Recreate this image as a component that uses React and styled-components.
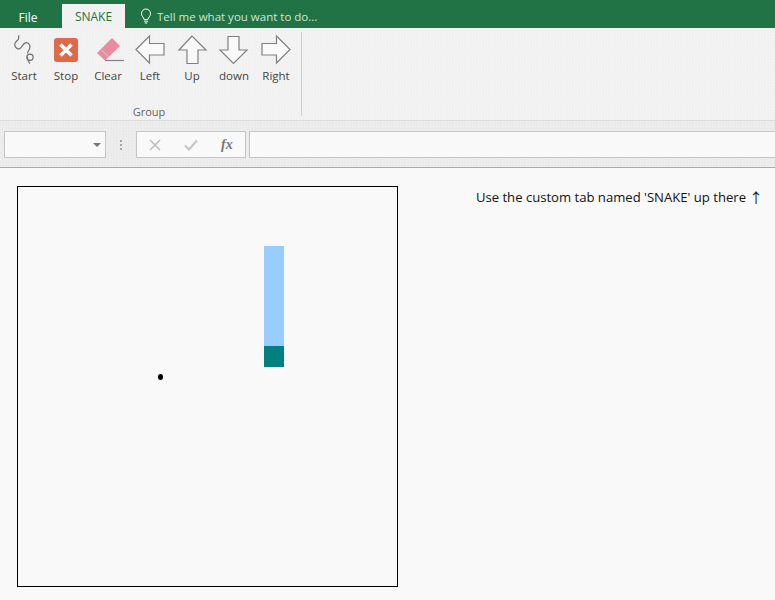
import React from "react";
import styled, { createGlobalStyle } from "styled-components";

const Global = createGlobalStyle`
  html, body { margin: 0; padding: 0; background: #f9f9f9; overflow: hidden; }
  body { width: 775px; height: 600px; font-family: "Open Sans", "Noto Sans", "Liberation Sans", sans-serif; }
`;

const Page = styled.div`
  width: 775px;
  height: 600px;
  display: flex;
  flex-direction: column;
  overflow: hidden;
`;

const TitleBar = styled.div`
  height: 24px;
  padding-top: 4px;
  background: #217346;
  display: flex;
  align-items: stretch;
`;

const FileTab = styled.div`
  width: 56px;
  margin-right: 6px;
  color: #fff;
  font-size: 12px;
  line-height: 27px;
  text-align: center;
`;

const ActiveTab = styled.div`
  width: 63px;
  background: #f1f1f1;
  color: #217346;
  font-size: 12px;
  line-height: 25px;
  text-align: center;
`;

const TellMe = styled.div`
  margin-left: 14px;
  display: flex;
  align-items: center;
  gap: 4px;
  color: #cfe6da;
  font-size: 11.5px;
`;

const Ribbon = styled.div`
  height: 93px;
  box-sizing: border-box;
  padding: 4px 0 0 3px;
  background-color: #f1f1f1;
  background-image: conic-gradient(#f3f3f3 25%, #f0f0f0 0 50%, #f3f3f3 0 75%, #f0f0f0 0);
  background-size: 3px 3px;
  border-bottom: 1px solid #dcdcdc;
  display: flex;
`;

const Group = styled.div`
  width: 298px;
  height: 84px;
  border-right: 1px solid #d0d0d0;
  display: flex;
  flex-direction: column;
  justify-content: space-between;
`;

const Buttons = styled.div`
  display: flex;
  padding-top: 2px;
`;

const RibbonButton = styled.div`
  width: 42px;
  display: flex;
  flex-direction: column;
  align-items: center;
  color: #444;
  font-size: 11.5px;
  line-height: 16px;
`;

const IconBox = styled.svg`
  width: 32px;
  height: 32px;
  display: block;
  margin-bottom: 2px;
  overflow: visible;
`;

const GroupLabel = styled.div`
  color: #666;
  font-size: 11px;
  line-height: 15px;
  text-align: center;
  padding-right: 6px;
  margin-bottom: -3px;
`;

const FormulaBar = styled.div`
  height: 47px;
  box-sizing: border-box;
  background-color: #ececec;
  background-image: conic-gradient(#eeeeee 25%, #e9e9e9 0 50%, #eeeeee 0 75%, #e9e9e9 0);
  background-size: 3px 3px;
  border-bottom: 1px solid #ababab;
  padding: 10px 0 9px 4px;
  display: flex;
  align-items: stretch;
`;

const NameBox = styled.div`
  width: 102px;
  box-sizing: border-box;
  background: #f9f9f9;
  border: 1px solid #c6c6c6;
  display: flex;
  align-items: center;
  justify-content: flex-end;
  padding-right: 4px;
`;

const Caret = styled.div`
  width: 0;
  height: 0;
  border-left: 4px solid transparent;
  border-right: 4px solid transparent;
  border-top: 4px solid #777;
`;

const Grip = styled.div`
  width: 30px;
  display: flex;
  flex-direction: column;
  align-items: center;
  justify-content: center;
  gap: 2px;
`;

const GripDot = styled.span`
  width: 2px;
  height: 2px;
  background: #a6a6a6;
`;

const FxBox = styled.div`
  width: 110px;
  box-sizing: border-box;
  background: #f9f9f9;
  border: 1px solid #c6c6c6;
  margin-right: 3px;
  display: flex;
  align-items: center;
  padding-left: 12px;
  gap: 23px;
`;

const FxGlyph = styled.span`
  font-family: "Liberation Serif", serif;
  font-style: italic;
  font-weight: bold;
  font-size: 14px;
  color: #777;
`;

const FormulaInput = styled.div`
  flex: 1;
  background: #f9f9f9;
  border: 1px solid #c6c6c6;
  border-right: none;
`;

const Main = styled.div`
  flex: 1;
  background: #f9f9f9;
  padding: 18px 12px 0 17px;
  display: flex;
  justify-content: space-between;
  align-items: flex-start;
`;

const Board = styled.div`
  position: relative;
  width: 381px;
  height: 401px;
  box-sizing: border-box;
  border: 1px solid #000;
`;

const Segment = styled.div`
  position: absolute;
  left: ${(p) => p.$x}px;
  top: ${(p) => p.$y}px;
  width: ${(p) => p.$w}px;
  height: ${(p) => p.$h}px;
  background: ${(p) => p.$c};
`;

const Food = styled(Segment)`
  border-radius: 50%;
`;

const Note = styled.div`
  font-size: 13.1px;
  line-height: 22px;
  color: #111;
  display: flex;
  align-items: center;
  gap: 3px;
`;

const NoteArrow = styled.span`
  font-family: "Noto Sans CJK JP", "DejaVu Sans", sans-serif;
  font-size: 14px;
  line-height: 22px;
  color: #111;
`;

const ARROW = { fill: "#f9f9f9", stroke: "#808080", strokeWidth: 1.2 };

const Arrow = ({ points }) => (
  <IconBox viewBox="0 0 32 32"><polygon points={points} {...ARROW} /></IconBox>
);

const StartIcon = () => (
  <IconBox viewBox="0 0 32 32">
    <g fill="none" stroke="#6e6e6e" strokeWidth="1.2">
      <path d="M10.7 1.3V4.5C10.7 6 6.5 7.5 6.7 10.5C6.9 13.5 9.5 15.5 11.7 14.7C14 13.8 14.5 9.5 17.5 8.8C20.5 8.2 22.5 11 21.8 14C21.4 16 19.5 17.5 19.5 19.5" />
      <circle cx="22" cy="23.3" r="3.1" />
      <path d="M19 22.5C19.5 25.5 20.5 27.5 21.7 29.7" />
    </g>
  </IconBox>
);

const StopIcon = () => (
  <IconBox viewBox="0 0 32 32">
    <rect x="4" y="4" width="24" height="24" rx="3" fill="#e0694a" />
    <path d="M10.5 10.5L21.5 21.5M21.5 10.5L10.5 21.5" stroke="#fff" strokeWidth="3.6" />
  </IconBox>
);

const ClearIcon = () => (
  <IconBox viewBox="0 0 32 32">
    <polygon points="20,5 27,12 13,25.5 6,19" fill="#e98ca1" stroke="#e98ca1" strokeWidth="1.5" strokeLinejoin="round" />
    <path d="M9.5 16L16.5 22.5" stroke="#f3c3ce" strokeWidth="1" />
    <path d="M13 26.5H32" stroke="#808080" strokeWidth="1.2" />
  </IconBox>
);

const Bulb = () => (
  <svg width="14" height="16" viewBox="0 0 14 16" fill="none" stroke="#ffffff" strokeWidth="1">
    <path d="M5 11.5C5 9.5 2.5 8.5 2.5 5.5C2.5 3 4.5 1 7 1C9.5 1 11.5 3 11.5 5.5C11.5 8.5 9 9.5 9 11.5Z" />
    <path d="M5 13.2H9M5.8 15H8.2" />
  </svg>
);

const buttons = [
  ["Start", <StartIcon />],
  ["Stop", <StopIcon />],
  ["Clear", <ClearIcon />],
  ["Left", <Arrow points="2,15.5 15.5,2 15.5,9.5 30,9.5 30,21 15.5,21 15.5,29" />],
  ["Up", <Arrow points="16,2 3,16 11,16 11,29.5 22,29.5 22,16 30,16" />],
  ["down", <Arrow points="10,2.5 21,2.5 21,16 29,16 15.5,29.5 2,16 10,16" />],
  ["Right", <Arrow points="2,9.5 16.5,9.5 16.5,2 30,15.5 16.5,29 16.5,21 2,21" />],
];

export default function App() {
  return (
    <Page>
      <Global />
      <TitleBar>
        <FileTab>File</FileTab>
        <ActiveTab>SNAKE</ActiveTab>
        <TellMe><Bulb />Tell me what you want to do...</TellMe>
      </TitleBar>
      <Ribbon>
        <Group>
          <Buttons>
            {buttons.map(([label, icon]) => (
              <RibbonButton key={label}>{icon}{label}</RibbonButton>
            ))}
          </Buttons>
          <GroupLabel>Group</GroupLabel>
        </Group>
      </Ribbon>
      <FormulaBar>
        <NameBox><Caret /></NameBox>
        <Grip><GripDot /><GripDot /><GripDot /></Grip>
        <FxBox>
          <svg width="12" height="12" viewBox="0 0 12 12"><path d="M1 1L11 11M11 1L1 11" stroke="#bdbdbd" strokeWidth="1.5" /></svg>
          <svg width="14" height="12" viewBox="0 0 14 12"><path d="M1 6.5L5 10.5L13 1.5" fill="none" stroke="#c4c4c4" strokeWidth="2" /></svg>
          <FxGlyph>fx</FxGlyph>
        </FxBox>
        <FormulaInput />
      </FormulaBar>
      <Main>
        <Board>
          <Segment $x={246} $y={59} $w={20} $h={100} $c="#99ccff" />
          <Segment $x={246} $y={159} $w={20} $h={21} $c="#008080" />
          <Food $x={140} $y={187} $w={5} $h={6} $c="#000" />
        </Board>
        <Note>Use the custom tab named 'SNAKE' up there<NoteArrow>↑</NoteArrow></Note>
      </Main>
    </Page>
  );
}
